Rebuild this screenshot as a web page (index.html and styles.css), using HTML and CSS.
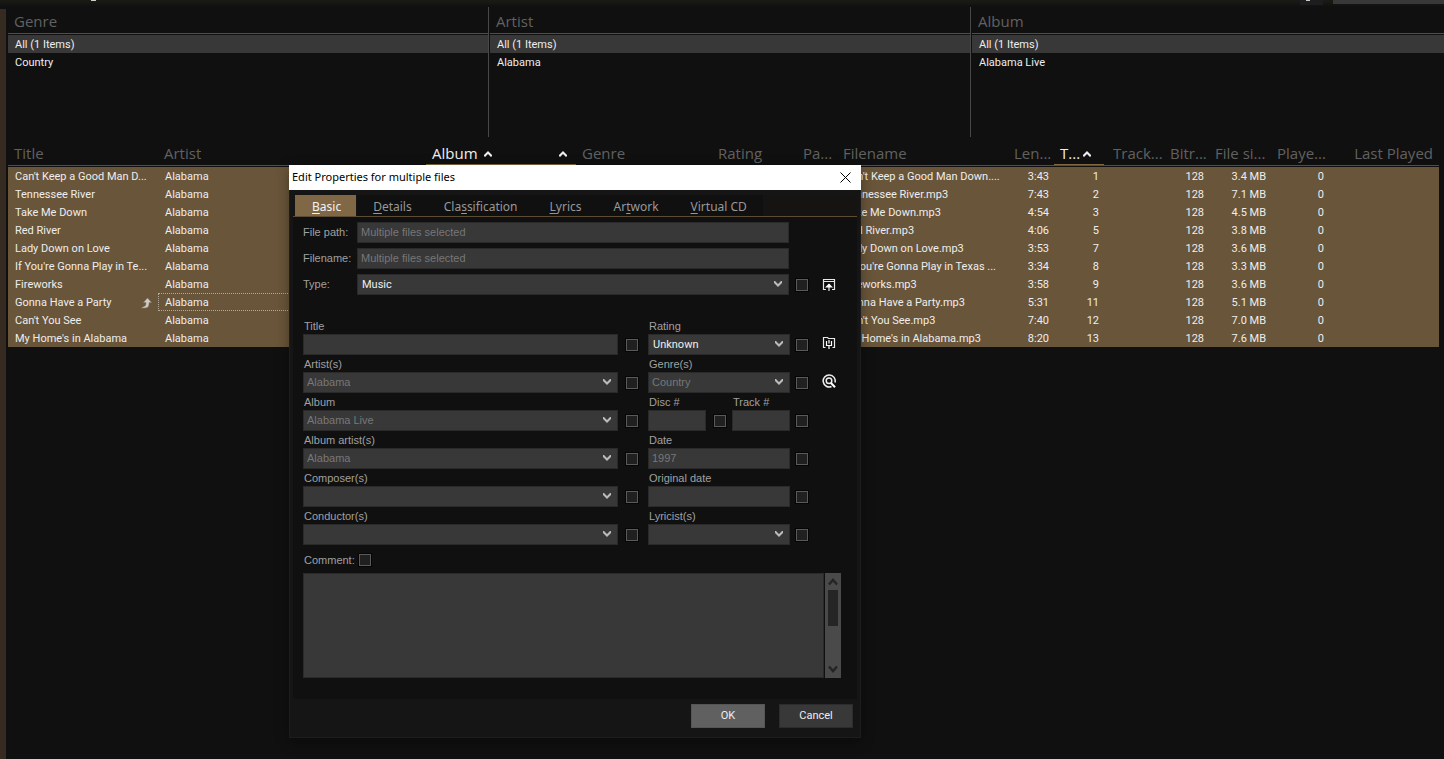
FILE: index.html
```html
<!DOCTYPE html>
<html lang="en">
<head>
<meta charset="utf-8">
<title>Music library</title>
<link rel="stylesheet" href="styles.css">
</head>
<body>
<svg class="defs" aria-hidden="true">
  <symbol id="chev" viewBox="0 0 8 7"><path d="M0 1v2l4 4 4-4V1H7L4 4 1 1z" fill="currentColor"/></symbol>
  <symbol id="caret" viewBox="0 0 8 6"><path d="M4 0L0 4v1l1 1 3-3 3 3 1-1V4z" fill="currentColor"/></symbol>
  <symbol id="scroll" viewBox="0 0 10 8"><path d="M1 6.500L5 2l4 4.500" fill="none" stroke="currentColor" stroke-width="2.500"/></symbol>
</svg>
<div class="app">
  <header class="topbar"><i class="mark"></i><i class="tool"><i class="tick"></i></i><i class="search"></i></header>
  <div class="shell">
    <aside class="edge"></aside>
    <main class="library">
      <div class="filters">
        <section class="filter"><h2>Genre</h2><ul><li class="on">All (1 Items)</li><li>Country</li></ul></section>
        <section class="filter"><h2>Artist</h2><ul><li class="on">All (1 Items)</li><li>Alabama</li></ul></section>
        <section class="filter"><h2>Album</h2><ul><li class="on">All (1 Items)</li><li>Alabama Live</li></ul></section>
      </div>
      <div class="list">
      <table class="tracks">
        <colgroup><col class="w150"><col><col class="w124"><col class="w26"><col class="w136"><col class="w85"><col class="w40"><col class="w171"><col class="w46"><col class="w50"><col class="w60"><col class="w45"><col class="w62"><col class="w58"><col class="w110"></colgroup>
        <thead><tr><th>Title</th><th>Artist</th><th class="sort">Album <svg class="caret"><use href="#caret"/></svg></th><th class="sort end"><svg class="caret"><use href="#caret"/></svg></th><th>Genre</th><th>Rating</th><th>Pa...</th><th>Filename</th><th class="end">Len...</th><th class="sort">T...<svg class="caret"><use href="#caret"/></svg></th><th class="gap">Track...</th><th>Bitr...</th><th>File si...</th><th>Playe...</th><th class="end">Last Played</th></tr></thead>
        <tbody>
          <tr><td>Can't Keep a Good Man D...</td><td>Alabama</td><td></td><td></td><td></td><td></td><td></td><td>Can't Keep a Good Man Down....</td><td class="n">3:43</td><td class="n">1</td><td></td><td class="n">128</td><td class="n">3.4 MB</td><td class="n">0</td><td></td></tr>
          <tr><td>Tennessee River</td><td>Alabama</td><td></td><td></td><td></td><td></td><td></td><td>Tennessee River.mp3</td><td class="n">7:43</td><td class="n">2</td><td></td><td class="n">128</td><td class="n">7.1 MB</td><td class="n">0</td><td></td></tr>
          <tr><td>Take Me Down</td><td>Alabama</td><td></td><td></td><td></td><td></td><td></td><td>Take Me Down.mp3</td><td class="n">4:54</td><td class="n">3</td><td></td><td class="n">128</td><td class="n">4.5 MB</td><td class="n">0</td><td></td></tr>
          <tr><td>Red River</td><td>Alabama</td><td></td><td></td><td></td><td></td><td></td><td>Red River.mp3</td><td class="n">4:06</td><td class="n">5</td><td></td><td class="n">128</td><td class="n">3.8 MB</td><td class="n">0</td><td></td></tr>
          <tr><td>Lady Down on Love</td><td>Alabama</td><td></td><td></td><td></td><td></td><td></td><td>Lady Down on Love.mp3</td><td class="n">3:53</td><td class="n">7</td><td></td><td class="n">128</td><td class="n">3.6 MB</td><td class="n">0</td><td></td></tr>
          <tr><td>If You're Gonna Play in Te...</td><td>Alabama</td><td></td><td></td><td></td><td></td><td></td><td>If You're Gonna Play in Texas ...</td><td class="n">3:34</td><td class="n">8</td><td></td><td class="n">128</td><td class="n">3.3 MB</td><td class="n">0</td><td></td></tr>
          <tr><td>Fireworks</td><td>Alabama</td><td></td><td></td><td></td><td></td><td></td><td>Fireworks.mp3</td><td class="n">3:58</td><td class="n">9</td><td></td><td class="n">128</td><td class="n">3.6 MB</td><td class="n">0</td><td></td></tr>
          <tr><td><div class="split">Gonna Have a Party <svg class="jump" viewBox="0 0 12 12"><path d="M1.500 11h3.500q4 0 4-4V5.500h2.500L7.500 1 3.500 5.500H6v1.500q0 2-2 2.500z" fill="#d0ccc4" stroke="#8b8375" stroke-width=".6"/></svg></div></td><td class="focus">Alabama</td><td></td><td></td><td></td><td></td><td></td><td>Gonna Have a Party.mp3</td><td class="n">5:31</td><td class="n">11</td><td></td><td class="n">128</td><td class="n">5.1 MB</td><td class="n">0</td><td></td></tr>
          <tr><td>Can't You See</td><td>Alabama</td><td></td><td></td><td></td><td></td><td></td><td>Can't You See.mp3</td><td class="n">7:40</td><td class="n">12</td><td></td><td class="n">128</td><td class="n">7.0 MB</td><td class="n">0</td><td></td></tr>
          <tr><td>My Home's in Alabama</td><td>Alabama</td><td></td><td></td><td></td><td></td><td></td><td>My Home's in Alabama.mp3</td><td class="n">8:20</td><td class="n">13</td><td></td><td class="n">128</td><td class="n">7.6 MB</td><td class="n">0</td><td></td></tr>
        </tbody>
      </table>
      </div>
    </main>
  </div>

  <form class="dialog" role="dialog" aria-labelledby="dlg">
    <div class="titlebar"><span id="dlg">Edit Properties for multiple files</span><button type="button" class="close" aria-label="Close"><svg viewBox="0 0 11 11"><path d="M.5.5l10 10M10.500.5l-10 10" stroke="#000" fill="none"/></svg></button></div>
    <div class="panel">
      <nav class="tabs"><button type="button" class="tab active"><u>B</u>asic</button><button type="button" class="tab"><u>D</u>etails</button><button type="button" class="tab">Cla<u>s</u>sification</button><button type="button" class="tab"><u>L</u>yrics</button><button type="button" class="tab">Ar<u>t</u>work</button><button type="button" class="tab"><u>V</u>irtual CD</button></nav>
      <div class="body">
        <div class="top">
          <label for="path">File path:</label><input id="path" class="ctl" placeholder="Multiple files selected"><i></i><i></i>
          <label for="name">Filename:</label><input id="name" class="ctl" placeholder="Multiple files selected"><i></i><i></i>
          <label for="type">Type:</label><div class="combo"><select id="type" class="ctl bright"><option>Music</option></select><svg><use href="#chev"/></svg></div><input type="checkbox" class="box" aria-label="Change type"><button type="button" class="act" aria-label="Load from file"><svg viewBox="0 0 14 14"><path d="M4 11.500H1.500v-10h11v10H10M1.500 3.500h11M7 13V6" fill="none" stroke="#e8e8e8" stroke-width="1.200"/><path d="M3 9.500L7 5.500l4 4z" fill="#fff"/></svg></button>
        </div>
        <div class="fields">
          <div class="field"><label for="title">Title</label><input id="title" class="ctl"></div><input type="checkbox" class="box" aria-label="Change title">
          <div class="field"><label for="rating">Rating</label><div class="combo"><select id="rating" class="ctl bright"><option>Unknown</option></select><svg><use href="#chev"/></svg></div></div><input type="checkbox" class="box right" aria-label="Change rating"><button type="button" class="act" aria-label="Save to file"><svg viewBox="0 0 14 14"><path d="M3.500 11.500h-2v-10h4l1 1h6v9h-2" fill="none" stroke="#e8e8e8" stroke-width="1.200"/><path d="M4.500 5v4.500h5V5M7 4v3.500M7 9.500V13" fill="none" stroke="#fff" stroke-width="1.200"/></svg></button>

          <div class="field"><label for="artist">Artist(s)</label><div class="combo"><select id="artist" class="ctl"><option>Alabama</option></select><svg><use href="#chev"/></svg></div></div><input type="checkbox" class="box" aria-label="Change artist">
          <div class="field"><label for="genre">Genre(s)</label><div class="combo"><select id="genre" class="ctl"><option>Country</option></select><svg><use href="#chev"/></svg></div></div><input type="checkbox" class="box right" aria-label="Change genre"><button type="button" class="act" aria-label="Look up"><svg viewBox="0 0 14 14"><path d="M9.500 12.500A6 6 0 1 1 13 8.500" fill="none" stroke="#eee" stroke-width="1.500"/><circle cx="7" cy="6.800" r="2.800" fill="none" stroke="#eee" stroke-width="1.500"/><path d="M9 9l4 4.200" stroke="#fff" stroke-width="2"/></svg></button>

          <div class="field"><label for="album">Album</label><div class="combo"><select id="album" class="ctl"><option>Alabama Live</option></select><svg><use href="#chev"/></svg></div></div><input type="checkbox" class="box" aria-label="Change album">
          <div class="pair"><div class="field"><label for="disc">Disc #</label><input id="disc" class="ctl"></div><input type="checkbox" class="box" aria-label="Change disc"><div class="field"><label for="track">Track #</label><input id="track" class="ctl"></div></div><input type="checkbox" class="box right" aria-label="Change track"><i></i>

          <div class="field"><label for="aartist">Album artist(s)</label><div class="combo"><select id="aartist" class="ctl"><option>Alabama</option></select><svg><use href="#chev"/></svg></div></div><input type="checkbox" class="box" aria-label="Change album artist">
          <div class="field"><label for="date">Date</label><input id="date" class="ctl" value="1997"></div><input type="checkbox" class="box right" aria-label="Change date"><i></i>

          <div class="field"><label for="composer">Composer(s)</label><div class="combo"><select id="composer" class="ctl"><option></option></select><svg><use href="#chev"/></svg></div></div><input type="checkbox" class="box" aria-label="Change composer">
          <div class="field"><label for="odate">Original date</label><input id="odate" class="ctl"></div><input type="checkbox" class="box right" aria-label="Change original date"><i></i>

          <div class="field"><label for="conductor">Conductor(s)</label><div class="combo"><select id="conductor" class="ctl"><option></option></select><svg><use href="#chev"/></svg></div></div><input type="checkbox" class="box" aria-label="Change conductor">
          <div class="field"><label for="lyricist">Lyricist(s)</label><div class="combo"><select id="lyricist" class="ctl"><option></option></select><svg><use href="#chev"/></svg></div></div><input type="checkbox" class="box right" aria-label="Change lyricist"><i></i>
        </div>
        <div class="comment-head"><label for="comment">Comment:</label><input type="checkbox" class="box" aria-label="Change comment"></div>
        <div class="comment"><textarea id="comment" class="ctl"></textarea><div class="scroll"><svg><use href="#scroll"/></svg><i class="thumb"></i><svg class="down"><use href="#scroll"/></svg></div></div>
      </div>
    </div>
    <footer class="foot"><button type="button" class="btn main">OK</button><button type="button" class="btn">Cancel</button></footer>
  </form>
</div>
</body>
</html>
```
FILE: styles.css
```css
* { box-sizing: border-box; }
body { margin: 0; background: #101010; color: #eee; font: 11px/18px Roboto, sans-serif; }
button, input, select, textarea { font: inherit; color: inherit; margin: 0; padding: 0; border: 0; border-radius: 0; background: none; }
h2, ul { margin: 0; padding: 0; list-style: none; font-weight: 400; }
.defs { position: absolute; width: 0; height: 0; }
.app { position: relative; display: flex; flex-direction: column; min-height: 100vh; }

.topbar { display: flex; height: 7px; background: linear-gradient(#1b1b16, #101010); }
.mark { width: 5px; height: 1px; margin-left: 91px; background: #ccc; }
.tool { display: flex; justify-content: center; width: 23px; height: 5px; margin-left: auto; background: #1d1d1d; }
.tick { width: 4px; height: 1px; background: #ccc; margin-right: 8px; }
.search { width: 111px; height: 4px; margin-left: 10px; background: #383838; }

.shell { display: flex; flex: 1; }
.edge { flex: none; width: 6px; margin: 2px 2px 0 0; background: #352b21; }
.library { flex: 1; min-width: 0; }
.filters { display: grid; grid-template-columns: 480fr 482fr 474fr; height: 130px; }
.filter + .filter { border-left: 1px solid #484848; padding-left: 1px; }
.filter h2 { height: 27px; padding: 1px 6px 0; border-bottom: 1px solid #5c4c33; font: 15px/26px "Open Sans", sans-serif; color: #616161; }
.filter ul { margin-top: 1px; }
.filter li { height: 18px; padding-left: 7px; line-height: 19px; }
.filter .on { background: #383838; }

.list { margin-top: 4px; }
.tracks { width: calc(100% - 5px); table-layout: fixed; border-collapse: separate; border-spacing: 0; }
.tracks th { height: 25px; padding: 0 0 0 6px; border-bottom: 1px solid #5c4c33; text-align: left; font: 15px/24px "Open Sans", sans-serif; color: #616161; white-space: nowrap; }
.tracks th.sort { color: #eee; box-shadow: inset 0 -1px #80683f; }
.tracks th.end { text-align: right; padding-right: 6px; }
.tracks th.sort.end { padding-right: 14px; }
.tracks th.gap { padding-left: 9px; }
.tracks th:last-child { padding-left: 0; }
.caret { width: 8px; height: 6px; margin: 0 0 2px 3px; }
.tracks th.end .caret { margin-right: 3px; }
.tracks tbody { background: #695539; }
.tracks tbody::before { content: ""; display: table-row; height: 1px; background: #101010; }
.tracks td { height: 18px; padding: 1px 0 0 7px; white-space: nowrap; line-height: 17px; }
.tracks td.n { text-align: right; padding: 1px 5px 0 0; }
.tracks td.focus { outline: 1px dotted #b5aa99; outline-offset: -1px; }
.split { display: flex; justify-content: space-between; align-items: center; height: 17px; padding-right: 6px; }
.jump { width: 12px; height: 12px; }
.w150 { width: 150px; } .w124 { width: 124px; } .w26 { width: 26px; } .w136 { width: 136px; }
.w85 { width: 85px; } .w40 { width: 40px; } .w171 { width: 171px; } .w46 { width: 46px; }
.w50 { width: 50px; } .w60 { width: 60px; } .w45 { width: 45px; } .w62 { width: 62px; }
.w58 { width: 58px; } .w110 { width: 110px; }

.dialog { position: absolute; left: 289px; top: 165px; width: 572px; background: #151515; box-shadow: inset 0 0 0 1px #1d1d1d, 0 4px 12px rgba(0, 0, 0, .35); }
.titlebar { display: flex; justify-content: space-between; align-items: center; height: 25px; padding: 0 10px 1px 3px; background: #fff; color: #000; font-family: "Noto Sans", sans-serif; }
.close { width: 11px; height: 11px; line-height: 0; }
.panel { margin: 5px 4px 0; background: #101010; }
.tabs { display: flex; height: 22px; padding-left: 2px; border-bottom: 1px solid #5c4c33; background: #151413; }
.tab { padding: 2px 16px 0; background: #101010; color: #989898; font: 12px/19px "Noto Sans", sans-serif; }
.tab.active { margin-right: 1px; padding: 2px 15px 0 17px; background: #806847; color: #f4f4f4; }
u { text-underline-offset: 2px; }
.body { padding: 5px 0 21px 10px; font-family: "Liberation Sans", Arial, sans-serif; color: #a0a0a0; }
.top { display: grid; grid-template-columns: 54px 432px 33px 14px; row-gap: 5px; align-items: center; }
.top label { padding-bottom: 2px; }
.ctl { display: block; width: 100%; height: 21px; padding: 0 3px 1px; border: 1px solid #2a2a2a; background: #383838; color: #777; line-height: 18px; appearance: none; outline: 0; }
.ctl::placeholder { color: #777; opacity: 1; }
.bright { padding: 0 4px; color: #eee; font-family: Roboto, sans-serif; line-height: 19px; }
.combo { position: relative; }
.combo svg { position: absolute; right: 7px; top: 6px; width: 8px; height: 7px; color: #bbb; pointer-events: none; }
.box { appearance: none; width: 12px; height: 12px; border: 1px solid #5a5a5a; background: #202020; outline: 1px solid #050505; }
.top .box { margin-left: 7px; }
.act { width: 14px; height: 14px; line-height: 0; }
.fields { display: grid; grid-template-columns: 315px 30px 142px 32px 14px; row-gap: 2px; margin-top: 24px; align-items: end; }
.field label { display: block; height: 15px; padding-left: 1px; line-height: 15px; }
.fields .box { margin: 0 8px 4px 8px; }
.fields .right { margin-left: 6px; }
.fields .act { margin-bottom: 5px; }
.pair { display: grid; grid-template-columns: 58px 26px 58px; align-items: end; }
.comment-head { display: flex; align-items: center; gap: 4px; height: 18px; margin: 6px 0 4px 1px; }
.comment { display: flex; gap: 1px; }
.comment .ctl { width: 521px; height: 105px; resize: none; }
.scroll { display: flex; flex-direction: column; align-items: center; width: 16px; padding: 5px 0; background: #4a4a4a; color: #252525; }
.scroll svg { width: 10px; height: 8px; }
.thumb { width: 10px; height: 36px; margin-top: 4px; background: #252525; }
.scroll .down { margin-top: auto; transform: rotate(180deg); }
.foot { display: flex; justify-content: flex-end; gap: 14px; padding: 5px 8px 10px; }
.btn { width: 74px; height: 24px; background: #383838; border: 1px solid #2c2c2c; color: #eee; line-height: 20px; }
.btn.main { background: #606060; border-color: #555; }
```
